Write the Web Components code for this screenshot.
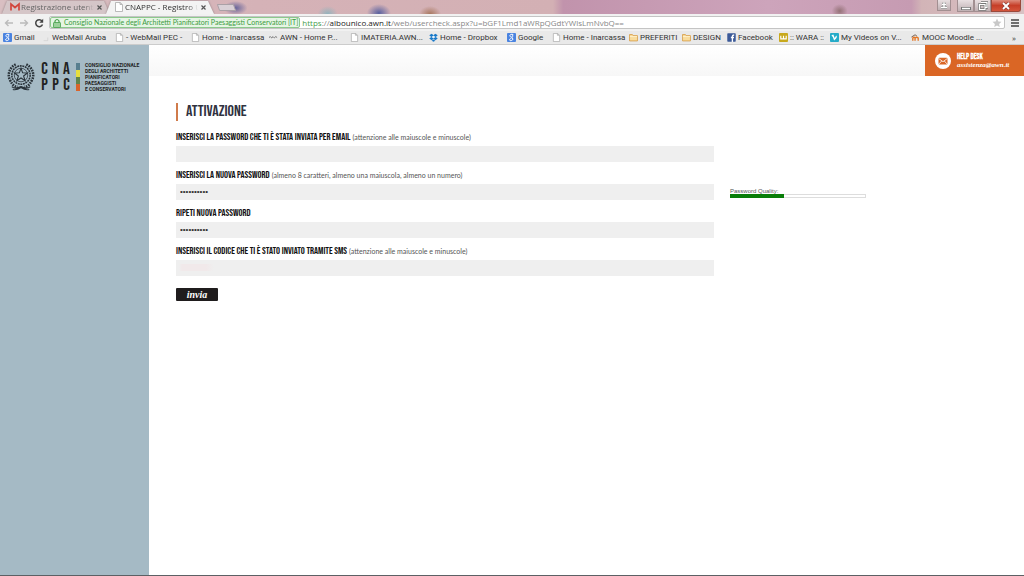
<!DOCTYPE html>
<html lang="it"><head><meta charset="utf-8"><title>CNAPPC - Registro Unico</title>
<style>
html,body{margin:0;height:100%;background:#fff}
body{font-family:"Liberation Sans",Arial,sans-serif;color:#333;--condensed:"Bebas Neue","Open Sans Condensed","Roboto Condensed",Roboto,sans-serif}
</style></head><body>
<app-window></app-window>
<script>
const define=(name,html,init)=>customElements.define(name,class extends HTMLElement{
  connectedCallback(){
    if(this.shadowRoot)return;
    this.attachShadow({mode:'open'}).innerHTML='<style>*{box-sizing:border-box}</style>'+html;
    if(init)init(this,this.shadowRoot);
  }
});
const glyphs={
  page:'<path d="M1.500.5h4.500l2.500 2v7h-7z M6 .5v2h2" fill="#fff" stroke="#aaa" stroke-width=".8"/>',
  google:'<rect width="10" height="10" rx="1" fill="#4a83e0"/><path d="M7 1.500H5C2.600 1.500 2.700 4.500 5 4.500S6.500 2 5 1.500M5 4.500l1 1c1.500 2-.5 3-2 3s-2-2 .8-2.400" fill="none" stroke="#fff" stroke-width="1.100"/>',
  faint:'<path d="M3 8.500h4.500V5" fill="none" stroke="#ccc" stroke-width=".7"/>',
  wave:'<path d="M0 5l1.500-1L3 5.500l1.500-1.500L6 5.500 7.500 4 9 5" fill="none" stroke="#666" stroke-width="1"/>',
  dropbox:'<path d="M3 .8L.3 2.600 2.500 4.400.3 6.200 3 8l2-1.600L7 8l2.700-1.800-2.200-1.800L9.700 2.600 7 .8 5 2.500zM5 7.200L3 8.600l2 1.200 2-1.200z" fill="#1878c8"/><path d="M5 2.700l2.200 1.700L5 6 2.800 4.400z" fill="#e8f3fb"/>',
  folder:'<path d="M.6 8.800V1.700h3.200l.8 1.200h4.800v5.900z" fill="#f9dc9c" stroke="#d69c45" stroke-width=".9"/><path d="M1 4h8" stroke="#fff3cf"/>',
  facebook:'<rect x=".3" y=".3" width="9.400" height="9.400" rx=".8" fill="#3b5998"/><path d="M6 10V3.300Q6 2.200 8 2.200M4.300 5h3.500" fill="none" stroke="#fff" stroke-width="1.500"/>',
  wara:'<rect width="10" height="10" rx="1" fill="#c8a91d"/><path d="M2 3v3.500h6V3M5 3v3.500" fill="none" stroke="#fff" stroke-width="1.300"/>',
  vimeo:'<rect width="10" height="10" rx="1" fill="#25abc8"/><path d="M2 3.300l1.300-.6L4.900 7C6.600 5.500 7.300 4 6.600 3.400" fill="none" stroke="#fff" stroke-width="1.500"/>',
  moodle:'<path d="M2 8.500V5.500q1.500-1.500 2.500 0v3M4.500 5.500q2-1.500 3.500 0v3" fill="none" stroke="#e37624" stroke-width="1.500"/><path d="M.5 4.500L4.500 2l2 1.300" fill="none" stroke="#6b5444" stroke-width="1"/>',
  gmail:'<path d="M1 8.500V2l4 3.500L9 2v6.500" fill="none" stroke="#d2453d" stroke-width="1.700"/>',
  back:'<path d="M9 5H1.500M4.500 2l-3 3 3 3" fill="none" stroke="#bbb" stroke-width="1.400"/>',
  forward:'<path d="M1 5h7.500M5.500 2l3 3-3 3" fill="none" stroke="#bbb" stroke-width="1.400"/>',
  reload:'<path d="M8 3A3.500 3.500 0 1 0 8.500 6.500" fill="none" stroke="#444" stroke-width="1.500"/><path d="M9.200.8v4H5.300z" fill="#444"/>',
  lock:'<path d="M3 5V3q2-3 4 0v2" fill="none" stroke="#48a04c" stroke-width="1.200"/><rect x="1.500" y="4.500" width="7" height="5" rx=".6" fill="#9bd19a" stroke="#48a04c" stroke-width=".8"/>',
  star:'<path d="M5 .5l1.300 3 3.200.3-2.400 2.100.7 3.200L5 7.400 2.200 9.100l.7-3.200L.5 3.800l3.200-.3z" fill="#c8c8c8"/>',
  menu:'<path d="M1 2h8M1 5h8M1 8h8" stroke="#444" stroke-width="1.600"/>'
};
define('ui-icon',`<style>:host{display:inline-block;flex:none;width:10px;height:10px}svg{display:block;width:100%;height:100%}</style><svg viewBox="0 0 10 10" aria-hidden="true"></svg>`,
 (h,r)=>r.querySelector('svg').innerHTML=glyphs[h.getAttribute('name')]);

define('browser-tab',`<style>
:host{display:block;height:14px;width:108px;margin-right:-4px;filter:drop-shadow(0 0 1px #8f8183)}
.tab{display:flex;align-items:center;gap:1px;height:100%;padding:0 6px 0 8px;background:#d5c6c8;clip-path:polygon(5px 1px,calc(100% - 6px) 1px,100% 100%,0 100%);color:#666;font-size:8px;line-height:12px;white-space:nowrap}
:host([active]) .tab{background:#f3f3f3;color:#333}
.t{flex:1;overflow:hidden;min-width:0;mask-image:linear-gradient(90deg,#000 86%,transparent)}
button{border:0;background:none;padding:0;width:9px;height:9px;display:grid}svg{width:5px;height:5px;margin:auto}
</style><div class="tab"><slot name="icon"></slot><span class="t"><slot></slot></span><button aria-label="Chiudi scheda"><svg viewBox="0 0 5 5"><path d="M.5.5l4 4m0-4l-4 4" stroke="#555" stroke-width="1.200"/></svg></button></div>`);

define('window-controls',`<style>
:host{display:flex;height:12px;margin-right:3px}
button{height:12px;border:1px solid #a28f91;border-top:0;padding:0;background:linear-gradient(#e9e0e2,#c0b1b4);display:grid;place-items:center;width:17px}
.user{width:14px;height:11px;margin-right:6px}.close{width:30px;background:linear-gradient(#dd8d7d,#c63e28 50%,#d4553b);border-color:#9a4a3c;border-radius:0 0 3px 0}
svg{width:10px;height:10px}
</style><button class="user" aria-label="Profilo"><svg viewBox="0 0 10 10"><path d="M5 2v5M2 7.500h6M3 4.500h4" stroke="#777" stroke-width="2.400"/><path d="M5 2v5M2 7.500h6M3 4.500h4" stroke="#fff" stroke-width="1.400"/></svg></button>
<button aria-label="Riduci"><svg viewBox="0 0 10 10"><path d="M0 7.500h10" stroke="#777" stroke-width="3"/><path d="M1 7.500h8" stroke="#fff" stroke-width="1.500"/></svg></button>
<button aria-label="Ripristina"><svg viewBox="0 0 10 10"><path d="M3 1.500h6v5H7.500M1.500 3.500h5.500v5H1.500z" fill="none" stroke="#777" stroke-width="2.600"/><path d="M3 1.500h6v5H7.500M1.500 3.500h5.500v5H1.500z" fill="none" stroke="#fff" stroke-width="1.200"/></svg></button>
<button class="close" aria-label="Chiudi"><svg viewBox="0 0 10 10"><path d="M2 2l6 6m0-6L2 8" stroke="#733" stroke-width="3"/><path d="M2 2l6 6m0-6L2 8" stroke="#fff" stroke-width="1.900"/></svg></button>`);

define('tab-strip',`<style>
:host{display:flex;height:14px;padding-left:2px;overflow:hidden;background:
radial-gradient(ellipse 12px 7px at 23% 8px,#66639a,transparent),
radial-gradient(ellipse 10px 8px at 32% 14px,#92b3bd,transparent),
radial-gradient(ellipse 12px 9px at 37% 13px,#5961a0,transparent),
radial-gradient(ellipse 11px 8px at 42% 14px,#a87860,transparent),
radial-gradient(ellipse 8px 7px at 82% 11px,#947277,transparent),
linear-gradient(90deg,#d9bfc2,#d5b2b7 25%,#d3b0b4 54%,#c193ac 55%,#cda4bb 75%,#c69bb2 89%,#d2b4b7 90%,#d9c2c4)}
.space{flex:1}
.new{border:1px solid #aaa0a6;background:#d9d0d6;width:17px;height:7px;margin:4px 0 0 8px;padding:0;border-radius:1px;transform:skewX(20deg)}
</style><browser-tab><ui-icon slot="icon" name="gmail"></ui-icon>Registrazione utenti</browser-tab><browser-tab active><ui-icon slot="icon" name="page"></ui-icon>CNAPPC - Registro Unico</browser-tab><button class="new" aria-label="Nuova scheda"></button><span class="space"></span><window-controls></window-controls>`);

define('address-bar',`<style>
:host{display:flex;align-items:center;gap:5px;height:17px;padding:0 4px;background:#f1f1f1}
button{display:grid;border:0;padding:0;background:none}
.box{flex:1;min-width:0;display:flex;align-items:center;gap:2px;height:13px;border:1px solid #c4c4c4;border-radius:2px;background:#fff;padding-right:2px}
.cert{display:flex;align-items:center;gap:2px;height:11px;padding:0 1px;border:1px solid #8cc98c;border-radius:2px;background:#e5f5e4;color:#3c9b3f;font:7px/9px Lato,sans-serif;white-space:nowrap}
.url{flex:1;min-width:0;font-size:8px;line-height:11px;color:#888;white-space:nowrap}.s{color:#4a9e4d}.d{color:#222}
</style><button aria-label="Indietro"><ui-icon name="back"></ui-icon></button><button aria-label="Avanti"><ui-icon name="forward"></ui-icon></button><button aria-label="Ricarica"><ui-icon name="reload"></ui-icon></button>
<div class="box"><span class="cert"><ui-icon name="lock"></ui-icon><span>Consiglio Nazionale degli Architetti Pianificatori Paesaggisti Conservatori [IT]</span></span><span class="url"><span class="s">https</span>://<span class="d">albounico.awn.it</span>/web/usercheck.aspx?u=bGF1Lmd1aWRpQGdtYWlsLmNvbQ==</span><ui-icon name="star"></ui-icon></div><button aria-label="Menu"><ui-icon name="menu"></ui-icon></button>`);

define('book-mark',`<style>:host{display:block;min-width:0}a{display:flex;align-items:center;gap:2px;color:#333;text-decoration:none;font-size:8px;line-height:12px;white-space:nowrap}ui-icon{width:9px;height:9px}</style><a href="#"><slot></slot></a>`,
 (h,r)=>{const n=document.createElement('ui-icon');n.setAttribute('name',h.getAttribute('icon'));r.querySelector('a').prepend(n);});

define('bookmarks-bar',`<style>
:host{display:grid;align-items:center;height:14px;padding-left:3px;background:#e9e9e9;border-bottom:1px solid #ccc;font-family:Roboto,sans-serif;
grid-template-columns:minmax(0,38fr) minmax(0,74fr) minmax(0,76fr) minmax(0,78fr) minmax(0,81fr) minmax(0,79fr) minmax(0,78fr) minmax(0,45fr) minmax(0,77fr) minmax(0,53fr) minmax(0,45fr) minmax(0,52fr) minmax(0,51fr) minmax(0,81fr) minmax(0,101fr) minmax(0,12fr)}
button{border:0;background:none;padding:0;font:8px/12px "Open Sans",sans-serif;color:#333;text-align:left}
</style><book-mark icon="google">Gmail</book-mark><book-mark icon="faint">WebMail Aruba</book-mark><book-mark icon="page">- WebMail PEC -</book-mark><book-mark icon="page">Home - Inarcassa</book-mark><book-mark icon="wave">AWN - Home P...</book-mark><book-mark icon="page">IMATERIA.AWN...</book-mark><book-mark icon="dropbox">Home - Dropbox</book-mark><book-mark icon="google">Google</book-mark><book-mark icon="page">Home - Inarcassa</book-mark><book-mark icon="folder">PREFERITI</book-mark><book-mark icon="folder">DESIGN</book-mark><book-mark icon="facebook">Facebook</book-mark><book-mark icon="wara">:: WARA ::</book-mark><book-mark icon="vimeo">My Videos on V...</book-mark><book-mark icon="moodle">MOOC Moodle ...</book-mark><button aria-label="Altri preferiti">»</button>`);

define('site-logo',`<style>
:host{display:flex;align-items:center;gap:5px;padding:15px 0 0 7px;color:#222}
.em{width:28px;height:33px;flex:none}.l{font:17px/16px var(--condensed);display:grid;grid-template-columns:repeat(3,11px);width:31px;padding-top:1px;justify-items:center;justify-content:center}
.bar{width:4px;height:28px;background:linear-gradient(#587f8f 25%,#e7df3e 25% 50%,#60854c 50% 75%,#d9642b 75%)}
.n{font:bold 5px/6px Roboto,sans-serif;white-space:nowrap}
</style><svg class="em" viewBox="0 0 29 33" fill="none" stroke="#293239" role="img" aria-label="Repubblica Italiana"><circle cx="14.500" cy="15" r="9.500" stroke-width="1.600" stroke-dasharray="2 .7"/><circle cx="14.500" cy="15" r="7" stroke-width=".8"/><path d="M14.500 8l1.700 4.700 5 .2-4 3.100 1.500 4.900-4.200-2.900-4.200 2.900 1.500-4.900-4-3.100 5-.2z" stroke-width="1.100"/><path d="M9 4C3 7 0 14 3 20s5 7 8 7M20 4c6 3 9 10 6 16s-5 7-8 7" stroke-width="2.600" stroke-dasharray="1.700 1"/><path d="M5 27q3 3 9.500 0 6.500 3 9.500 0M6 30q4 1 8.500-2 4.500 3 8.500 2" stroke-width="1.200"/></svg>
<div class="l"><span>C</span><span>N</span><span>A</span><span>P</span><span>P</span><span>C</span></div><span class="bar"></span><div class="n">CONSIGLIO NAZIONALE<br>DEGLI ARCHITETTI<br>PIANIFICATORI<br>PAESAGGISTI<br>E CONSERVATORI</div>`);

define('help-desk',`<style>
:host{display:block}a{display:flex;align-items:center;gap:6px;width:99px;height:31px;padding-left:10px;background:#da6625;color:#fff;text-decoration:none;font-size:7px;line-height:8px}
svg{width:16px;height:16px}b,i{display:block}b{font:bold 8px/8px var(--condensed)}i{font-family:"Liberation Serif",serif;font-weight:bold}
</style><a href="mailto:assistenza@awn.it"><svg viewBox="0 0 16 16"><circle cx="8" cy="8" r="8" fill="#fff"/><rect x="3.500" y="4.700" width="9" height="6.800" rx="1" fill="#da6625"/><path d="M3.700 5.500L8 8.700l4.300-3.200M3.900 11l2.800-3M12.100 11L9.300 8" fill="none" stroke="#fff" stroke-width=".8"/></svg><span><b>HELP DESK</b><i>assistenza@awn.it</i></span></a>`);

define('form-field',`<style>
:host{display:block}label{display:flex;align-items:baseline;gap:2px;height:13px;margin-bottom:2px;white-space:nowrap}
b{font:normal 10px/13px var(--condensed);color:#111}small{font:7px/13px Lato,sans-serif;color:#555}
input{display:block;width:100%;height:16px;border:0;padding:0 4px;background:#efefef;color:#333;font:8px/16px "Liberation Sans",sans-serif;outline:0;border-radius:0}
:host([masked]) input{background:linear-gradient(90deg,transparent 3px,#f1e9ea 6px 30px,transparent 38px) 0 4px/100% 7px no-repeat #efefef}
</style><label for="f"><b></b><small></small></label><input id="f">`,
 (h,r)=>{r.querySelector('b').textContent=h.getAttribute('label');const s=r.querySelector('small');h.hasAttribute('hint')?s.textContent=h.getAttribute('hint'):s.remove();const i=r.querySelector('input');i.type=h.getAttribute('type')||'text';i.value=h.getAttribute('value')||'';});

define('password-quality',`<style>
:host{display:block;font-size:6px;line-height:6px;color:#555}
.track{height:4px;border:1px solid #ddd;background:#fff}.fill{width:40%;height:4px;margin:-1px 0 0 -1px;background:#087d08}
</style><span id="q">Password Quality:</span><div class="track" role="meter" aria-labelledby="q" aria-valuenow="40" aria-valuemin="0" aria-valuemax="100"><div class="fill"></div></div>`);

define('activation-form',`<style>
:host{display:block;padding:27px 0 0 27px}
h1{margin:0 0 10px;border-left:2px solid #d07b4b;padding-left:8px;font:normal 16px/18px var(--condensed);color:#30323f}
form{display:grid;grid-template-columns:minmax(0,538fr) minmax(0,136fr) minmax(0,142fr);column-gap:16px;row-gap:7px}
form-field{grid-column:1}password-quality{grid-column:2;grid-row:2;align-self:end;margin-bottom:2px}
button{grid-column:1;justify-self:start;width:42px;height:13px;margin-top:5px;padding:0;border:0;border-radius:1px;background:#1f1c1d;color:#fff;font:italic bold 10px/12px "Liberation Serif",serif}
</style><h1>ATTIVAZIONE</h1><form>
<form-field type="password" label="INSERISCI LA PASSWORD CHE TI È STATA INVIATA PER EMAIL" hint="(attenzione alle maiuscole e minuscole)"></form-field>
<form-field type="password" value="Password10" label="INSERISCI LA NUOVA PASSWORD" hint="(almeno 8 caratteri, almeno una maiuscola, almeno un numero)"></form-field><password-quality></password-quality>
<form-field type="password" value="Password10" label="RIPETI NUOVA PASSWORD"></form-field>
<form-field masked label="INSERISCI IL CODICE CHE TI È STATO INVIATO TRAMITE SMS" hint="(attenzione alle maiuscole e minuscole)"></form-field>
<button type="button">invia</button></form>`);

define('app-window',`<style>
:host{display:flex;flex-direction:column;min-height:100vh}
.chrome{font-family:"Open Sans","Noto Sans",sans-serif}
.page{flex:1;display:grid;grid-template-columns:minmax(149px,14.500%) minmax(0,1fr);border-bottom:1px solid #5c6064}
aside{background:#a5bac5}header{display:flex;justify-content:flex-end;height:31px;background:linear-gradient(#fff,#f7f7f7)}
</style><div class="chrome"><tab-strip></tab-strip><address-bar></address-bar><bookmarks-bar></bookmarks-bar></div>
<div class="page"><aside><site-logo></site-logo></aside><main><header><help-desk></help-desk></header><activation-form></activation-form></main></div>`);
</script></body></html>
